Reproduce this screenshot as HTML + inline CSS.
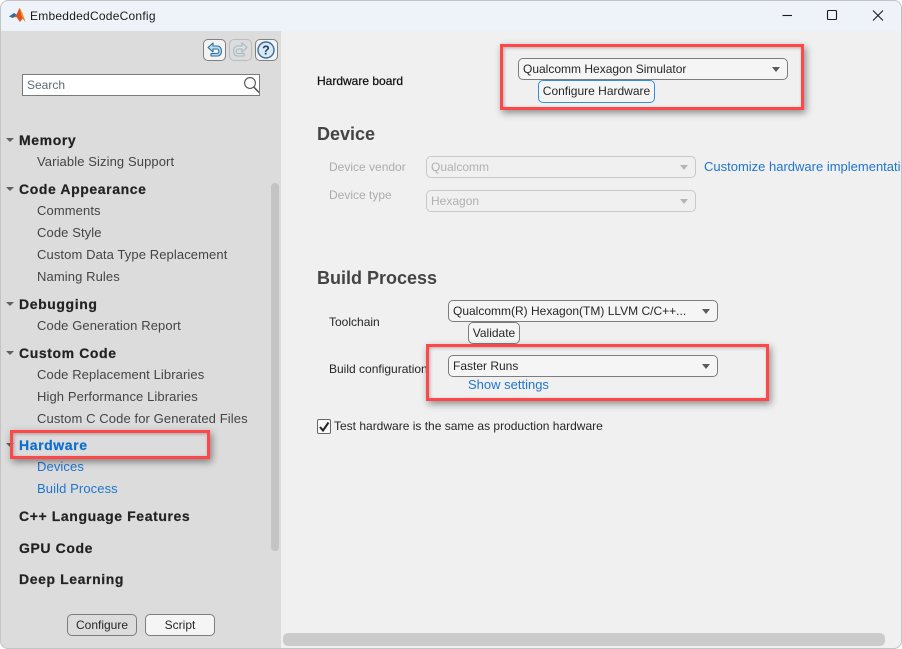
<!DOCTYPE html>
<html><head><meta charset="utf-8"><style>
html,body{margin:0;padding:0;background:#fff}
#w{position:relative;width:902px;height:649px;overflow:hidden;font-family:"Liberation Sans",sans-serif;font-size:12px;color:#262626;background:#f0f0f0;box-sizing:border-box}
#w div,#w span.a{position:absolute;white-space:nowrap;box-sizing:border-box}
.h{left:19px;font-weight:bold;font-size:14px;letter-spacing:.6px;line-height:16px;color:#222;-webkit-text-stroke:.2px currentColor}
.i{left:37px;font-size:13px;letter-spacing:.1px;line-height:16px;color:#444}
.blue{color:#0a6fd0!important}
.lb{font-size:12px;line-height:16px;color:#262626}
.dd{background:#f5f5f5;border:1px solid #7d7d7d;border-radius:5px;height:22px;line-height:20px;padding-left:4px;font-size:12px;color:#262626}
.dd.off{background:#f0f0f0;border-color:#c8c8c8;color:#b0b0b0}
.ar{width:0;height:0;border-left:4.5px solid transparent;border-right:4.5px solid transparent;border-top:5px solid #5c5c5c;top:8px}
.off .ar{border-top-color:#b5b5b5}
.tw{border-left-width:4px!important;border-right-width:4px!important;border-top-width:4px!important;border-top-color:#5f5f5f!important}
.btn{background:#f5f5f5;border:1px solid #7d7d7d;border-radius:5px;text-align:center;font-size:12px;color:#262626}
.red{border:3px solid #ff4747;box-shadow:2px 3px 7px rgba(0,0,0,.42),inset 1px 1px 3px rgba(0,0,0,.28)}
.sec{font-weight:bold;font-size:18px;line-height:22px;color:#444}
.tb{width:23px;height:22px;border:1px solid #808080;border-radius:5px;background:#f3f3f3}
</style></head><body>
<div id="w">
<div style="left:0;top:0;width:902px;height:31px;background:#eef3f9"></div>
<svg style="position:absolute;left:9px;top:8px" width="17" height="15" viewBox="0 0 17 15"><path d="M0 8.5 L5 5 L7.5 6.5 L4 10Z" fill="#2a6ea8"/><path d="M4 9.5 L7.5 6.5 L10.5 0 L13 4 L16.5 14 L13.5 10.5 L11 14 L7.5 9Z" fill="#d9541e"/><path d="M10.5 0 L13 4 L16.5 14 L12.5 8Z" fill="#f39a22"/></svg>
<div style="left:30px;top:8px;font-size:12px;line-height:16px;color:#1a1a1a;letter-spacing:.02em">EmbeddedCodeConfig</div>
<svg style="position:absolute;left:780px;top:5px" width="122" height="22" viewBox="0 0 122 22" fill="none" stroke="#1a1a1a" stroke-width="1.1"><path d="M2.5 10.5H12"/><rect x="47.5" y="5.5" width="9" height="9" rx="1"/><path d="M93 5.5l10 10M103 5.5l-10 10"/></svg>

<div style="left:0;top:31px;width:281px;height:618px;background:#dcdcdc"></div>
<div class="tb" style="left:203px;top:39px"></div>
<svg style="position:absolute;left:203px;top:39px" width="23" height="22" viewBox="0 0 23 22" fill="none"><path d="M5 8.5 L10 4 V7 H14.5 C19.5 7 20 17 14.5 17 H8 V14.5 H14 C16.5 14.5 16.5 10 14 10 H10 V13Z" fill="#b9dcf2" stroke="#2d6f9f" stroke-width="1.1" stroke-linejoin="round"/></svg>
<div class="tb" style="left:229px;top:39px;background:#dcdcdc;border-color:#bcbcbc"></div>
<svg style="position:absolute;left:229px;top:39px" width="23" height="22" viewBox="0 0 23 22" fill="none"><path d="M18 8.5 L13 4 V7 H8.5 C3.5 7 3 17 8.5 17 H15 V14.5 H9 C6.5 14.5 6.5 10 9 10 H13 V13Z" fill="#d8e2e8" stroke="#a8b6bf" stroke-width="1.1" stroke-linejoin="round"/></svg>
<div class="tb" style="left:255px;top:39px"></div>
<svg style="position:absolute;left:255px;top:39px" width="23" height="22" viewBox="0 0 23 22"><circle cx="11" cy="11" r="8" fill="#d9e9f5" stroke="#3a6f99" stroke-width="1.4"/><text x="11" y="15.5" font-family="Liberation Sans" font-weight="bold" font-size="12.5" text-anchor="middle" fill="#1f3f66">?</text></svg>

<div style="left:22px;top:74px;width:238px;height:22px;background:#fff;border:1px solid #7a7a7a;padding-left:4px;line-height:20px;font-size:12px;color:#5f6b76">Search</div>
<svg style="position:absolute;left:242px;top:75px" width="18" height="20" viewBox="0 0 18 20" fill="none"><circle cx="8" cy="8" r="5.4" stroke="#555" stroke-width="1.1"/><path d="M11.8 12 L17 17.5" stroke="#555" stroke-width="1.6"/></svg>

<div class="ar tw" style="left:6px;top:138px"></div><div class="h" style="top:132px">Memory</div>
<div class="i" style="top:154px">Variable Sizing Support</div>
<div class="ar tw" style="left:6px;top:187px"></div><div class="h" style="top:181px">Code Appearance</div>
<div class="i" style="top:203px">Comments</div>
<div class="i" style="top:225px">Code Style</div>
<div class="i" style="top:247px">Custom Data Type Replacement</div>
<div class="i" style="top:269px">Naming Rules</div>
<div class="ar tw" style="left:6px;top:302px"></div><div class="h" style="top:296px">Debugging</div>
<div class="i" style="top:318px">Code Generation Report</div>
<div class="ar tw" style="left:6px;top:351px"></div><div class="h" style="top:345px">Custom Code</div>
<div class="i" style="top:367px">Code Replacement Libraries</div>
<div class="i" style="top:389px">High Performance Libraries</div>
<div class="i" style="top:411px">Custom C Code for Generated Files</div>
<div class="ar tw" style="left:6px;top:443px"></div><div class="h blue" style="top:437px">Hardware</div>
<div class="i blue" style="top:459px;color:#1f76cf!important">Devices</div>
<div class="i blue" style="top:481px;color:#1f76cf!important">Build Process</div>
<div class="h" style="top:508px">C++ Language Features</div>
<div class="h" style="top:540px">GPU Code</div>
<div class="h" style="top:571px">Deep Learning</div>
<div class="red" style="left:10px;top:430px;width:200px;height:29px"></div>
<div style="left:271px;top:183px;width:8px;height:368px;background:#c4c4c4;border-radius:4px"></div>
<div class="btn" style="left:67px;top:614px;width:70px;height:22px;line-height:20px;background:#dcdcdc">Configure</div>
<div class="btn" style="left:145px;top:614px;width:70px;height:22px;line-height:20px">Script</div>

<div class="lb" style="left:317px;top:73px;color:#111;-webkit-text-stroke:.25px #111">Hardware board</div>
<div class="dd" style="left:518px;top:58px;width:270px">Qualcomm Hexagon Simulator<div class="ar" style="right:7px"></div></div>
<div class="btn" style="left:538px;top:80px;width:117px;height:23px;line-height:21px;border-color:#2f8fe0;background:#f5f5f5">Configure Hardware</div>
<div class="red" style="left:500px;top:44px;width:304px;height:66px"></div>

<div class="sec" style="left:317px;top:123px">Device</div>
<div class="lb" style="left:329px;top:159px;color:#acacac">Device vendor</div>
<div class="dd off" style="left:426px;top:156px;width:270px">Qualcomm<div class="ar" style="right:7px"></div></div>
<div class="lb" style="left:704px;top:159px;color:#1f76cf;font-size:13px">Customize hardware implementation</div>
<div class="lb" style="left:329px;top:187px;color:#acacac">Device type</div>
<div class="dd off" style="left:426px;top:190px;width:270px">Hexagon<div class="ar" style="right:7px"></div></div>

<div class="sec" style="left:317px;top:267px">Build Process</div>
<div class="lb" style="left:329px;top:314px">Toolchain</div>
<div class="dd" style="left:448px;top:300px;width:270px">Qualcomm(R) Hexagon(TM) LLVM C/C++...<div class="ar" style="right:7px"></div></div>
<div class="btn" style="left:468px;top:322px;width:52px;height:22px;line-height:20px">Validate</div>
<div class="lb" style="left:329px;top:361px">Build configuration</div>
<div class="dd" style="left:448px;top:355px;width:270px">Faster Runs<div class="ar" style="right:7px"></div></div>
<div class="lb" style="left:468px;top:377px;color:#1f76cf;font-size:13px">Show settings</div>
<div class="red" style="left:426px;top:344px;width:343px;height:57px"></div>

<div style="left:317px;top:419px;width:14px;height:15px;background:#fafafa;border:1px solid #666;border-radius:2px"></div>
<svg style="position:absolute;left:317px;top:419px" width="14" height="15" viewBox="0 0 14 15" fill="none"><path d="M3 8 L6 11.5 L11.5 3.5" stroke="#222" stroke-width="2"/></svg>
<div class="lb" style="left:334px;top:418px">Test hardware is the same as production hardware</div>

<div style="left:283px;top:633px;width:602px;height:13px;background:#cbcbcb;border-radius:5px"></div>
<div style="left:0;top:0;width:902px;height:649px;border:1px solid #c4c4c4;border-radius:8px;box-shadow:0 0 0 4px #fff"></div>
</div>
</body></html>
